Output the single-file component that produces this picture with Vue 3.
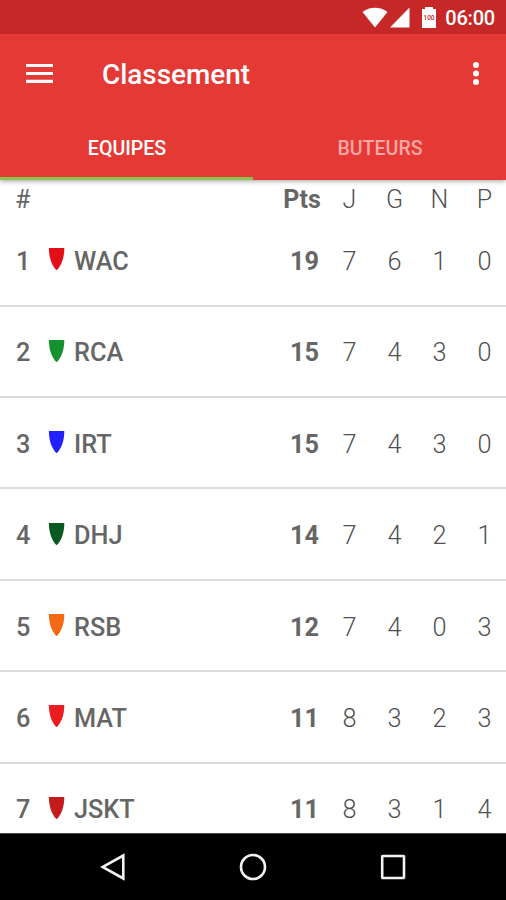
<script setup>
const tabs = [
  { label: 'EQUIPES', active: true },
  { label: 'BUTEURS', active: false },
];

const teams = [
  { name: 'WAC', color: '#e30f17', pts: 19, stats: [7, 6, 1, 0] },
  { name: 'RCA', color: '#15912f', pts: 15, stats: [7, 4, 3, 0] },
  { name: 'IRT', color: '#2222ff', pts: 15, stats: [7, 4, 3, 0] },
  { name: 'DHJ', color: '#07591f', pts: 14, stats: [7, 4, 2, 1] },
  { name: 'RSB', color: '#f26a14', pts: 12, stats: [7, 4, 0, 3] },
  { name: 'MAT', color: '#ec1c20', pts: 11, stats: [8, 3, 2, 3] },
  { name: 'JSKT', color: '#c41c1c', pts: 11, stats: [8, 3, 1, 4] },
];
</script>

<template>
  <div class="screen">
    <div class="status-bar">
      <svg class="wifi" width="26" height="21" viewBox="0 0 26 21">
        <path d="M0.500 5C7.500 -0.800 18.500 -0.800 25.500 5L13 20.500Z" fill="#fff" />
      </svg>
      <svg class="signal" width="20" height="21" viewBox="0 0 20 21">
        <path d="M19.500 0.500V20.500H0Z" fill="#fff" />
      </svg>
      <svg class="battery" width="14" height="21" viewBox="0 0 14 21">
        <path d="M3 0H11V2H14V21H0V2H3Z" fill="#fff" />
        <text x="7" y="12.500" text-anchor="middle">100</text>
      </svg>
      <span class="time">06:00</span>
    </div>

    <header class="app-bar">
      <div class="toolbar">
        <svg width="27" height="20" viewBox="0 0 27 20">
          <path d="M0 1.500H27M0 9.500H27M0 17.300H27" stroke="#fff" stroke-width="3.200" />
        </svg>
        <h1 class="title">Classement</h1>
        <svg width="8" height="24" viewBox="0 0 8 24">
          <circle cx="4" cy="3" r="3" fill="#fff" />
          <circle cx="4" cy="11.500" r="3" fill="#fff" />
          <circle cx="4" cy="20" r="3" fill="#fff" />
        </svg>
      </div>
      <nav class="tabs">
        <div v-for="tab in tabs" :key="tab.label" :class="['tab', { active: tab.active }]">
          {{ tab.label }}
        </div>
      </nav>
    </header>

    <main class="ranking">
      <div class="row head">
        <span class="hash">#</span>
        <span></span>
        <span></span>
        <span class="pts">Pts</span>
        <span class="stat">J</span>
        <span class="stat">G</span>
        <span class="stat">N</span>
        <span class="stat">P</span>
      </div>
      <div v-for="(team, i) in teams" :key="team.name" class="row team">
        <span class="rank">{{ i + 1 }}</span>
        <svg class="shield" width="17" height="22" viewBox="0 0 17 22">
          <path d="M0.900 0H16.300C16.400 8 14 17 8.900 22H8.300C3.200 17 0.800 8 0.900 0Z" :fill="team.color" />
        </svg>
        <span class="name">{{ team.name }}</span>
        <span class="pts">{{ team.pts }}</span>
        <span v-for="(stat, j) in team.stats" :key="j" class="stat">{{ stat }}</span>
      </div>
    </main>

    <footer class="nav-bar">
      <svg width="26" height="28" viewBox="0 0 26 28">
        <path d="M23.300 2.500V25.500L2.500 14Z" />
      </svg>
      <svg width="28" height="28" viewBox="0 0 28 28">
        <circle cx="14" cy="14" r="12" />
      </svg>
      <svg width="26" height="28" viewBox="0 0 26 28">
        <rect x="2.200" y="3" width="21.800" height="22" rx="0.500" />
      </svg>
    </footer>
  </div>
</template>

<style>
body {
  margin: 0;
  overflow: hidden;
}
</style>

<style scoped>
.screen {
  display: flex;
  flex-direction: column;
  width: 506px;
  height: 900px;
  overflow: hidden;
  background: #fff;
  font-family: Roboto, sans-serif;
  color: #666;
}

svg {
  display: block;
  flex: none;
}

.status-bar {
  position: relative;
  z-index: 2;
  display: flex;
  align-items: center;
  justify-content: flex-end;
  flex: none;
  height: 34px;
  box-sizing: border-box;
  padding-right: 11px;
  background: #c62828;
  color: #fff;
}

.signal {
  margin-left: 2px;
}

.battery {
  margin: 0 9px 0 12px;
}

.battery text {
  font-size: 6.5px;
  font-weight: 500;
  fill: #c62828;
}

.time {
  padding-top: 2px;
  font-size: 20px;
  font-weight: 500;
  line-height: 34px;
  letter-spacing: -0.2px;
}

.app-bar {
  position: relative;
  z-index: 1;
  flex: none;
  height: 146px;
  background: #e53935;
  color: #fff;
  box-shadow: 0 1px 5px rgba(0, 0, 0, 0.4);
}

.toolbar {
  display: flex;
  align-items: center;
  height: 80px;
  padding: 0 26px;
}

.title {
  flex: 1;
  margin: 0 0 0 49px;
  padding-top: 2px;
  font-size: 27.9px;
  font-weight: 500;
  line-height: 32px;
}

.tabs {
  display: flex;
  height: 66px;
}

.tab {
  flex: 1;
  box-sizing: border-box;
  padding: 22px 0 0 1px;
  border-bottom: 3px solid transparent;
  font-size: 19.6px;
  font-weight: 500;
  line-height: 25px;
  text-align: center;
  color: #fba8a5;
}

.tab.active {
  border-bottom-color: #8bc34a;
  color: #fff;
}

.ranking {
  flex: 1;
  min-height: 0;
  overflow: hidden;
}

.row {
  display: grid;
  grid-template-columns: 32px 26px 1fr 45px repeat(4, 45px);
  align-items: center;
  margin-right: -1px;
  padding-left: 16px;
  font-size: 25.3px;
  line-height: 30px;
}

.head {
  height: 35.3px;
  font-size: 25px;
  line-height: 40px;
}

.head .pts {
  padding-right: 5px;
}

.hash {
  margin-left: -1px;
}

.team {
  height: 91.4px;
  box-sizing: border-box;
  padding-top: 4px;
  border-bottom: 2px solid #dcdcdc;
}

.shield {
  margin-bottom: 5px;
}

.rank,
.name {
  font-weight: 500;
}

.pts {
  font-weight: 700;
  text-align: center;
}

.stat {
  font-weight: 300;
  text-align: center;
  color: #505050;
}

.nav-bar {
  display: flex;
  align-items: center;
  justify-content: space-between;
  flex: none;
  height: 67px;
  box-sizing: border-box;
  padding: 0 100px;
  border-top: 1px solid #444;
  background: #000;
}

.nav-bar svg {
  fill: none;
  stroke: #f2f2f2;
  stroke-width: 2.6;
}
</style>
